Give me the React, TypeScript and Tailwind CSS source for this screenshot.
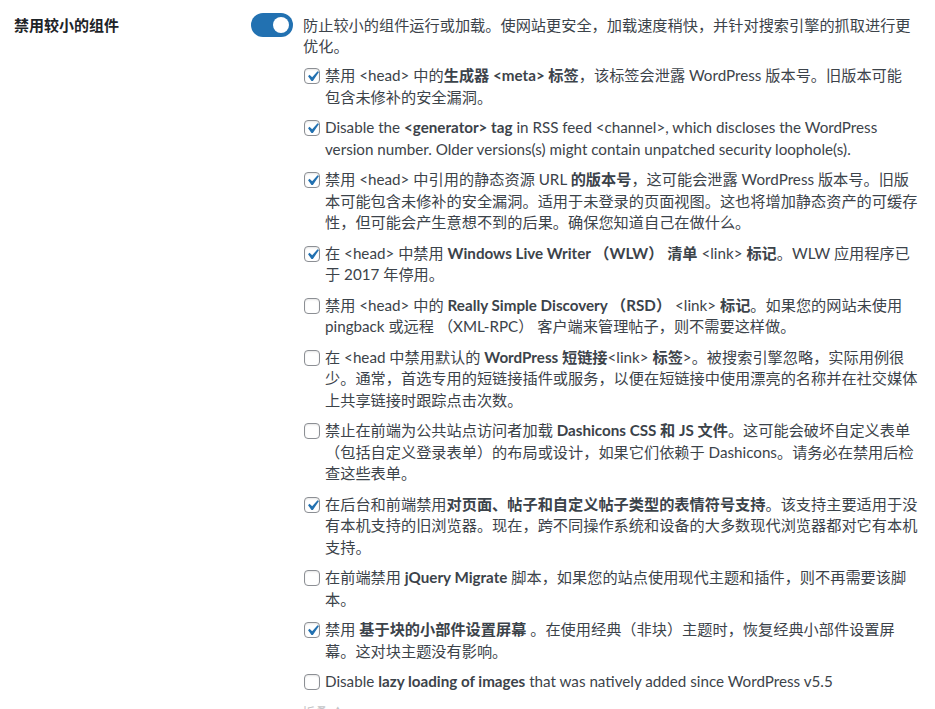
import React from "react";

function Checkbox({ checked }: { checked: boolean }) {
  return (
    <span className="relative mt-[3px] block h-[16px] w-[16px] shrink-0 rounded-[4px] border border-[#8c8f94] bg-white shadow-[inset_0_1px_2px_rgba(0,0,0,0.1)]">
      {checked && (
        <svg
          viewBox="0 0 20 20"
          className="absolute left-[-3px] top-[-3px] h-[21px] w-[21px]"
        >
          <path
            d="M14.83 4.89l1.34.94-5.81 8.38H9.02L5.78 9.67l1.34-1.25 2.57 2.4z"
            fill="#2271b1"
          />
        </svg>
      )}
    </span>
  );
}

function Item({ checked, children }: { checked: boolean; children: React.ReactNode }) {
  return (
    <div className="mb-[9px] flex gap-[5px]">
      <Checkbox checked={checked} />
      <div className="whitespace-nowrap">{children}</div>
    </div>
  );
}

export default function App() {
  return (
    <div className="h-[709px] w-[935px] overflow-hidden bg-white font-['Lato','Noto_Sans_CJK_SC',sans-serif] text-[#3c434a]">
      <div className="flex pl-[14px] pt-[13px]">
        <div className="w-[237px] text-[15px] font-bold leading-[24px] text-[#1d2327]">
          禁用较小的组件
        </div>
        <div className="flex-1">
          <div className="flex gap-[10px]">
            <div className="relative h-[24px] w-[42px] shrink-0 rounded-full bg-[#2271b1]">
              <span className="absolute right-[4px] top-[4px] h-[16px] w-[16px] rounded-full bg-white" />
            </div>
            <div className="mt-[2px] whitespace-nowrap text-[15.2px] leading-[21px]">
              防止较小的组件运行或加载。使网站更安全，加载速度稍快，并针对搜索引擎的抓取进行更
              <br />
              优化。
            </div>
          </div>
          <div className="ml-[53px] mt-[8px] text-[15.2px] leading-[21.5px]">
            <Item checked>
              禁用 &lt;head&gt; 中的<b>生成器 &lt;meta&gt; 标签</b>，该标签会泄露 WordPress 版本号。旧版本可能
              <br />
              包含未修补的安全漏洞。
            </Item>
            <Item checked>
              Disable the <b>&lt;generator&gt; tag</b> in RSS feed &lt;channel&gt;, which discloses the WordPress
              <br />
              version number. Older versions(s) might contain unpatched security loophole(s).
            </Item>
            <Item checked>
              禁用 &lt;head&gt; 中引用的静态资源 URL <b>的版本号</b>，这可能会泄露 WordPress 版本号。旧版
              <br />
              本可能包含未修补的安全漏洞。适用于未登录的页面视图。这也将增加静态资产的可缓存
              <br />
              性，但可能会产生意想不到的后果。确保您知道自己在做什么。
            </Item>
            <Item checked>
              在 &lt;head&gt; 中禁用 <b>Windows Live Writer （WLW） 清单</b> &lt;link&gt; <b>标记</b>。WLW 应用程序已
              <br />
              于 2017 年停用。
            </Item>
            <Item checked={false}>
              禁用 &lt;head&gt; 中的 <b>Really Simple Discovery （RSD）</b> &lt;link&gt; <b>标记</b>。如果您的网站未使用
              <br />
              pingback 或远程 （XML-RPC） 客户端来管理帖子，则不需要这样做。
            </Item>
            <Item checked={false}>
              在 &lt;head 中禁用默认的 <b>WordPress 短链接</b>&lt;link&gt; <b>标签</b>&gt;。被搜索引擎忽略，实际用例很
              <br />
              少。通常，首选专用的短链接插件或服务，以便在短链接中使用漂亮的名称并在社交媒体
              <br />
              上共享链接时跟踪点击次数。
            </Item>
            <Item checked={false}>
              禁止在前端为公共站点访问者加载 <b>Dashicons CSS 和 JS 文件</b>。这可能会破坏自定义表单
              <br />
              （包括自定义登录表单）的布局或设计，如果它们依赖于 Dashicons。请务必在禁用后检
              <br />
              查这些表单。
            </Item>
            <Item checked>
              在后台和前端禁用<b>对页面、帖子和自定义帖子类型的表情符号支持</b>。该支持主要适用于没
              <br />
              有本机支持的旧浏览器。现在，跨不同操作系统和设备的大多数现代浏览器都对它有本机
              <br />
              支持。
            </Item>
            <Item checked={false}>
              在前端禁用 <b>jQuery Migrate</b> 脚本，如果您的站点使用现代主题和插件，则不再需要该脚
              <br />
              本。
            </Item>
            <Item checked>
              禁用 <b>基于块的小部件设置屏幕</b> 。在使用经典（非块）主题时，恢复经典小部件设置屏
              <br />
              幕。这对块主题没有影响。
            </Item>
            <Item checked={false}>
              Disable <b>lazy loading of images</b> that was natively added since WordPress v5.5
            </Item>
            <div className="ml-[-2px] text-[13px] leading-[20px] text-[#c3c4c7]">折叠 ▲</div>
          </div>
        </div>
      </div>
    </div>
  );
}
